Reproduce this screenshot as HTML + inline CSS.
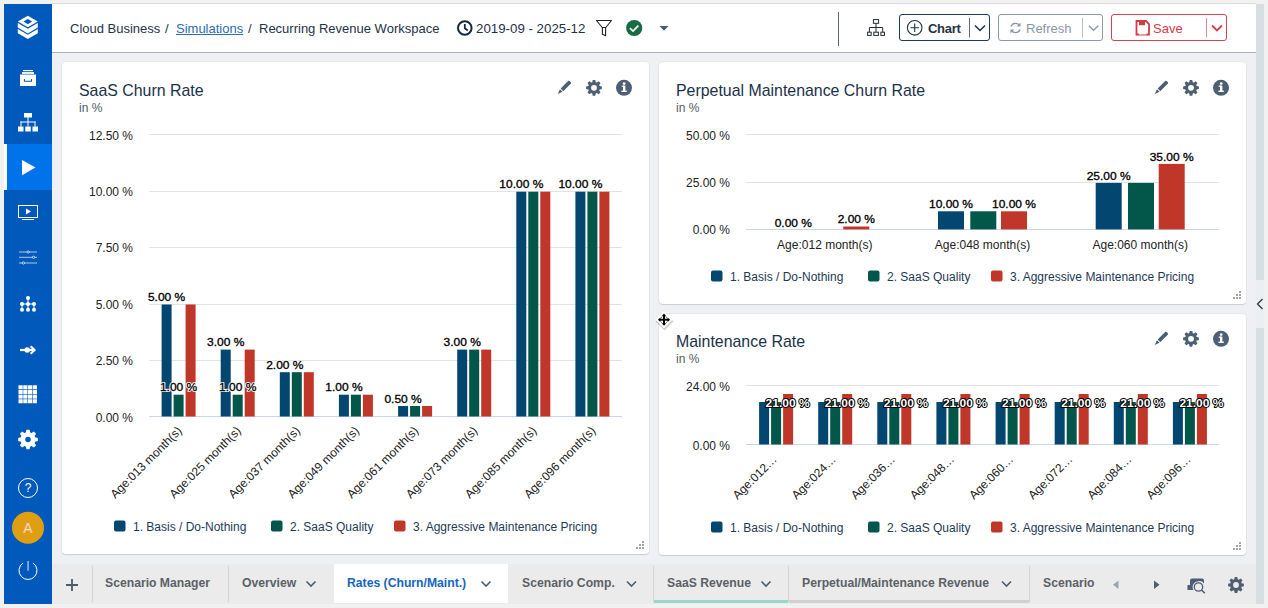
<!DOCTYPE html>
<html><head><meta charset="utf-8">
<style>
*{box-sizing:border-box;margin:0;padding:0}
html,body{width:1268px;height:608px;overflow:hidden;background:#f1f1f1;font-family:"Liberation Sans",sans-serif}
.abs{position:absolute}
#side{left:4px;top:4px;width:48px;height:600px;background:#0059bb}
#hdr{left:52px;top:4px;width:1204px;height:49px;background:#fff;border-bottom:1px solid #aab3ba}
#content{left:52px;top:53px;width:1204px;height:511px;background:#eef0f3}
#rstrip{left:1256px;top:4px;width:8px;height:600px;background:#d7dfe2}
.card{background:#fff;border-radius:4px;box-shadow:0 1px 1px rgba(0,0,0,.12),0 0 0 1px rgba(0,0,0,.03)}
.ttl{font-size:15.9px;color:#1a3148;white-space:nowrap;margin-top:1px}
.sub{font-size:12px;color:#555b61;white-space:nowrap;margin-top:1px}
.crumb{font-size:13px;color:#1d3347;white-space:nowrap;margin-top:1px}
#tabs{left:52px;top:564px;width:1204px;height:40px;background:#ebebeb}
.tab{font-size:12.2px;font-weight:700;color:#5b6167;white-space:nowrap}
.sep{width:1px;background:#d4d4d4}
svg text{font-family:"Liberation Sans",sans-serif}
</style></head>
<body>
<div class="abs" id="side"></div>
<div class="abs" id="hdr"></div>
<div class="abs" style="left:52px;top:3px;width:1204px;height:1px;background:#dcdcdc"></div>
<div class="abs" id="content"></div>
<div class="abs" id="rstrip"></div>
<div class="abs" style="left:1256px;top:280px;width:8px;height:48px;background:#eceff1"></div>

<!-- active sidebar item -->
<div class="abs" style="left:4px;top:144px;width:48px;height:46px;background:#0073eb"></div>
<div class="abs" style="left:4px;top:144px;width:3px;height:46px;background:#fff"></div>

<!-- cards -->
<div class="abs card" style="left:62px;top:62px;width:587px;height:492px"></div>
<div class="abs card" style="left:659px;top:62px;width:587px;height:242px"></div>
<div class="abs card" style="left:659px;top:314px;width:587px;height:241px"></div>

<!-- breadcrumbs -->
<div class="abs crumb" style="left:70px;top:20px">Cloud Business</div>
<div class="abs crumb" style="left:165px;top:20px">/</div>
<div class="abs crumb" style="left:176px;top:20px;color:#2a6db0;text-decoration:underline">Simulations</div>
<div class="abs crumb" style="left:248px;top:20px">/</div>
<div class="abs crumb" style="left:259px;top:20px">Recurring Revenue Workspace</div>
<div class="abs crumb" style="left:476px;top:20px;font-size:13.3px;margin-top:0.5px">2019-09 - 2025-12</div>

<!-- header buttons -->
<div class="abs" style="left:838px;top:12px;width:1px;height:34px;background:#5d6670"></div>
<div class="abs" style="left:899px;top:14px;width:91px;height:27px;border:1.5px solid #1f3a55;border-radius:3px"></div>
<div class="abs" style="left:928px;top:21px;font-size:13px;font-weight:700;color:#1d3347;letter-spacing:-0.3px">Chart</div>
<div class="abs" style="left:998px;top:14px;width:105px;height:27px;border:1.5px solid #8b9aaa;border-radius:3px"></div>
<div class="abs" style="left:1026px;top:21px;font-size:13px;color:#8797a8">Refresh</div>
<div class="abs" style="left:1111px;top:14px;width:116px;height:27px;border:1.5px solid #d9414d;border-radius:3px"></div>
<div class="abs" style="left:1153px;top:21px;font-size:13px;color:#d63a47">Save</div>

<!-- card titles -->
<div class="abs ttl" style="left:79px;top:81px">SaaS Churn Rate</div>
<div class="abs sub" style="left:79px;top:100px">in %</div>
<div class="abs ttl" style="left:676px;top:81px">Perpetual Maintenance Churn Rate</div>
<div class="abs sub" style="left:676px;top:100px">in %</div>
<div class="abs ttl" style="left:676px;top:332px">Maintenance Rate</div>
<div class="abs sub" style="left:676px;top:351px">in %</div>

<!-- tabs -->
<div class="abs" id="tabs"></div>
<div class="abs sep" style="left:92px;top:566px;height:36px"></div>
<div class="abs sep" style="left:228px;top:566px;height:36px"></div>
<div class="abs" style="left:334px;top:564px;width:174px;height:39px;background:#fff"></div>
<div class="abs sep" style="left:653px;top:566px;height:36px"></div>
<div class="abs sep" style="left:788px;top:566px;height:36px"></div>
<div class="abs sep" style="left:1029px;top:566px;height:36px"></div>
<div class="abs" style="left:654px;top:600px;width:134px;height:3px;background:#95d9cc"></div>
<div class="abs" style="left:789px;top:600px;width:240px;height:3px;background:#d0d0d0"></div>
<div class="abs tab" style="left:105px;top:576px">Scenario Manager</div>
<div class="abs tab" style="left:242px;top:576px">Overview</div>
<div class="abs tab" style="left:347px;top:576px;color:#1565c0">Rates (Churn/Maint.)</div>
<div class="abs tab" style="left:522px;top:576px">Scenario Comp.</div>
<div class="abs tab" style="left:667px;top:576px">SaaS Revenue</div>
<div class="abs tab" style="left:802px;top:576px">Perpetual/Maintenance Revenue</div>
<div class="abs tab" style="left:1043px;top:576px">Scenario</div>

<svg class="abs" style="left:0;top:0" width="1268" height="608" viewBox="0 0 1268 608">
<defs><path id="gearpath" d="M-2.20,-7.07 L-1.60,-9.87 L1.60,-9.87 L2.20,-7.07 A7.4,7.4 0 0 1 3.44,-6.55 L5.85,-8.11 L8.11,-5.85 L6.55,-3.44 A7.4,7.4 0 0 1 7.07,-2.20 L9.87,-1.60 L9.87,1.60 L7.07,2.20 A7.4,7.4 0 0 1 6.55,3.44 L8.11,5.85 L5.85,8.11 L3.44,6.55 A7.4,7.4 0 0 1 2.20,7.07 L1.60,9.87 L-1.60,9.87 L-2.20,7.07 A7.4,7.4 0 0 1 -3.44,6.55 L-5.85,8.11 L-8.11,5.85 L-6.55,3.44 A7.4,7.4 0 0 1 -7.07,2.20 L-9.87,1.60 L-9.87,-1.60 L-7.07,-2.20 A7.4,7.4 0 0 1 -6.55,-3.44 L-8.11,-5.85 L-5.85,-8.11 L-3.44,-6.55 A7.4,7.4 0 0 1 -2.20,-7.07 Z M3.6,0 A3.6,3.6 0 1 0 -3.6,0 A3.6,3.6 0 1 0 3.6,0 Z" fill-rule="evenodd"/></defs>
<!-- sidebar logo -->
<g fill="#fff">
<path d="M27.8,15.8 L37.8,21.5 L27.8,27.3 L17.8,21.5 Z M27.8,19.1 L32.1,21.6 L27.8,24.2 L23.5,21.6 Z" fill-rule="evenodd"/>
<path d="M17.8,22.9 L27.8,28.7 L37.8,22.9 L37.8,27.6 L27.8,33.4 L17.8,27.6 Z"/>
<path d="M17.8,29.0 L27.8,34.8 L37.8,29.0 L37.8,33.2 L27.8,38.9 L17.8,33.2 Z"/>
</g>
<!-- archive -->
<g fill="#fff">
<rect x="23" y="70" width="10" height="1.2"/>
<rect x="22" y="72.1" width="12" height="1.8"/>
<path d="M20,74.6 H36 V86 H20 Z M23.9,79 V81.8 H32 V79 H31 V80.8 H24.9 V79 Z" fill-rule="evenodd"/>
</g>
<!-- hierarchy -->
<g fill="#fff">
<rect x="24" y="113" width="8" height="4.5"/>
<rect x="18" y="126.5" width="5.5" height="5"/>
<rect x="25.3" y="126.5" width="5.5" height="5"/>
<rect x="32.5" y="126.5" width="5.5" height="5"/>
<rect x="27.5" y="117" width="1" height="9.5"/>
<rect x="20.5" y="121.5" width="15" height="1"/>
<rect x="20.5" y="121.5" width="1" height="5"/>
<rect x="34.5" y="121.5" width="1" height="5"/>
</g>
<!-- play -->
<path d="M22,160 L35.5,167.5 L22,175.3 Z" fill="#fff"/>
<!-- monitor -->
<g fill="none" stroke="#fff" stroke-width="1">
<rect x="18.5" y="205.5" width="19" height="12"/>
</g>
<path d="M26,208.5 L31,211.5 L26,214.5 Z" fill="#fff"/>
<rect x="22" y="219" width="12" height="1" fill="#fff"/>
<!-- sliders -->
<g stroke="#fff" stroke-width="0.8" fill="#0059bb" stroke-opacity="0.85">
<line x1="19" y1="252" x2="37" y2="252"/>
<line x1="19" y1="257.3" x2="37" y2="257.3"/>
<line x1="19" y1="263" x2="37" y2="263"/>
<circle cx="28.2" cy="252" r="1.15"/>
<circle cx="33.6" cy="257.3" r="1.15"/>
<circle cx="23.4" cy="263" r="1.15"/>
</g>
<!-- network dots -->
<g fill="#fff">
<circle cx="28" cy="298" r="2"/>
<circle cx="22" cy="304" r="2"/><circle cx="28" cy="304" r="2"/><circle cx="34" cy="304" r="2"/>
<circle cx="22" cy="309.8" r="2"/><circle cx="28" cy="309.8" r="2"/><circle cx="34" cy="309.8" r="2"/>
<rect x="22" y="303.5" width="12" height="1"/>
<rect x="27.5" y="298" width="1" height="12"/><rect x="21.5" y="304" width="1" height="6"/><rect x="33.5" y="304" width="1" height="6"/>
</g>
<!-- arrow -->
<g fill="#fff">
<rect x="20" y="348.9" width="13" height="2.2"/>
<circle cx="27.2" cy="350" r="2.7"/>
<path d="M30.6,346.2 L34.6,350 L30.6,353.8" fill="none" stroke="#fff" stroke-width="2.1"/>
</g>
<!-- grid -->
<g fill="#fff">
<rect x="18.50" y="385.30" width="4.2" height="4.0"/><rect x="23.25" y="385.30" width="4.2" height="4.0"/><rect x="28.00" y="385.30" width="4.2" height="4.0"/><rect x="32.75" y="385.30" width="4.2" height="4.0"/><rect x="18.50" y="389.95" width="4.2" height="4.0"/><rect x="23.25" y="389.95" width="4.2" height="4.0"/><rect x="28.00" y="389.95" width="4.2" height="4.0"/><rect x="32.75" y="389.95" width="4.2" height="4.0"/><rect x="18.50" y="394.60" width="4.2" height="4.0"/><rect x="23.25" y="394.60" width="4.2" height="4.0"/><rect x="28.00" y="394.60" width="4.2" height="4.0"/><rect x="32.75" y="394.60" width="4.2" height="4.0"/><rect x="18.50" y="399.25" width="4.2" height="4.0"/><rect x="23.25" y="399.25" width="4.2" height="4.0"/><rect x="28.00" y="399.25" width="4.2" height="4.0"/><rect x="32.75" y="399.25" width="4.2" height="4.0"/>
</g>
<!-- gear sidebar -->
<g transform="translate(28,439.5)">
<g fill="#fff"><path d="M-2.20,-7.07 L-1.60,-9.87 L1.60,-9.87 L2.20,-7.07 A7.4,7.4 0 0 1 3.44,-6.55 L5.85,-8.11 L8.11,-5.85 L6.55,-3.44 A7.4,7.4 0 0 1 7.07,-2.20 L9.87,-1.60 L9.87,1.60 L7.07,2.20 A7.4,7.4 0 0 1 6.55,3.44 L8.11,5.85 L5.85,8.11 L3.44,6.55 A7.4,7.4 0 0 1 2.20,7.07 L1.60,9.87 L-1.60,9.87 L-2.20,7.07 A7.4,7.4 0 0 1 -3.44,6.55 L-5.85,8.11 L-8.11,5.85 L-6.55,3.44 A7.4,7.4 0 0 1 -7.07,2.20 L-9.87,1.60 L-9.87,-1.60 L-7.07,-2.20 A7.4,7.4 0 0 1 -6.55,-3.44 L-8.11,-5.85 L-5.85,-8.11 L-3.44,-6.55 A7.4,7.4 0 0 1 -2.20,-7.07 Z M2.8,0 A2.8,2.8 0 1 0 -2.8,0 A2.8,2.8 0 1 0 2.8,0 Z" fill-rule="evenodd"/></g>
</g>
<!-- question -->
<circle cx="28" cy="488" r="9.5" fill="none" stroke="#fff" stroke-width="1"/>
<text x="28" y="492.3" text-anchor="middle" style="font-size:12px;font-weight:400" fill="#fff">?</text>
<!-- avatar -->
<circle cx="28" cy="527.8" r="16" fill="#e09e12"/>
<text x="28" y="533" text-anchor="middle" style="font-size:14px" fill="#f7d9cf">A</text>
<!-- power -->
<path d="M33.16,563.13 A9,9 0 1 1 22.84,563.13" fill="none" stroke="#fff" stroke-width="1"/>
<rect x="27.5" y="561" width="1.1" height="9.7" fill="#cfe0f5"/>

<!-- header: clock -->
<circle cx="464.8" cy="28" r="6.8" fill="none" stroke="#14283d" stroke-width="2"/>
<path d="M464.8,24 V28.3 L467.8,30.5" fill="none" stroke="#14283d" stroke-width="1.8"/>
<!-- filter -->
<path d="M596.5,20.5 H611.5 L605.8,27.5 H602.2 Z M602.4,27.5 V34.3 L605.6,35.8 V27.5" fill="none" stroke="#222" stroke-width="1.1" stroke-linejoin="round"/>
<!-- check -->
<circle cx="634.2" cy="28" r="8.1" fill="#186b45"/>
<path d="M629.9,28.1 L633,31 L638.4,25.6" fill="none" stroke="#fff" stroke-width="1.7"/>
<!-- caret -->
<path d="M659.5,26 H668.5 L664,30.8 Z" fill="#4d5e70"/>
<!-- hierarchy header -->
<g fill="none" stroke="#262b31" stroke-width="1">
<rect x="873.4" y="19.6" width="5.2" height="3.7"/>
<rect x="867.6" y="32.2" width="3.6" height="3.2"/>
<rect x="873.8" y="32.2" width="4.6" height="3.2"/>
<rect x="880.9" y="32.2" width="3.6" height="3.2"/>
<path d="M876,23.3 V32.2 M869.4,32.2 V27.5 H882.7 V32.2"/>
</g>
<!-- chart plus -->
<circle cx="914.7" cy="27.8" r="7.3" fill="none" stroke="#1d3347" stroke-width="1.1"/>
<path d="M914.7,23.5 V32 M910.5,27.8 H919" stroke="#1d3347" stroke-width="1.1"/>
<rect x="969" y="18" width="1" height="19.5" fill="#5f6b77"/>
<path d="M975,25.5 L980,30.5 L985,25.5" fill="none" stroke="#1d3347" stroke-width="1.5"/>
<!-- refresh -->
<path d="M1019.5,25.5 A4.8,4.8 0 0 0 1011,26.5 M1011.5,30.5 A4.8,4.8 0 0 0 1020,29.5" fill="none" stroke="#8797a8" stroke-width="1.4"/>
<path d="M1020.5,22.5 V26.5 H1016.8 Z M1010.5,33.5 V29.5 H1014.2 Z" fill="#8797a8"/>
<rect x="1082" y="18" width="1" height="19.5" fill="#b3bdc7"/>
<path d="M1088.8,25.8 L1093.5,30.3 L1098.2,25.8" fill="none" stroke="#8b9aaa" stroke-width="1.3"/>
<!-- save floppy -->
<path d="M1136.5,21 H1146 L1149,24 V34.5 H1136.5 Z" fill="none" stroke="#d63a47" stroke-width="1.8"/>
<rect x="1139" y="21" width="6" height="4.2" fill="#d63a47"/>
<rect x="1139" y="29" width="7.5" height="5.5" fill="#fff"/>
<rect x="1206" y="18" width="1" height="19.5" fill="#e28a92"/>
<path d="M1212,25.5 L1217,30.5 L1222,25.5" fill="none" stroke="#d63a47" stroke-width="1.8"/>

<!-- card icons -->
<g id="ci1">
<g transform="translate(563.8,88) rotate(45)" fill="#4d5f72">
<rect x="-1.8" y="-8.6" width="3.6" height="11.2" rx="0.3"/>
<path d="M-1.6,-8.2 A1.8,1.8 0 0 1 1.6,-8.2 V-7.4 H-1.6 Z"/>
<path d="M-1.8,3.6 H1.8 L0,8.6 Z"/>
</g>
<g transform="translate(594,87.8) scale(0.8)" fill="#4d5f72"><use href="#gearpath"/></g>
<circle cx="624" cy="87.8" r="8" fill="#4d5f72"/>
<g fill="#fff">
<circle cx="624.2" cy="83.6" r="1.4"/>
<rect x="623" y="85.6" width="2.4" height="5.6"/>
<rect x="621.7" y="85.6" width="2.5" height="1.2"/>
<rect x="621.4" y="90.6" width="5.4" height="1.4"/>
</g>
</g>
<g transform="translate(597,0)"><use href="#ci1"/></g>
<g transform="translate(597,251)"><use href="#ci1"/></g>
<!-- resize handles -->
<g id="rh" fill="#a3a3a3">
<rect x="642" y="541" width="2" height="2"/>
<rect x="639" y="544" width="2" height="2"/><rect x="642" y="544" width="2" height="2"/>
<rect x="636" y="547" width="2" height="2"/><rect x="639" y="547" width="2" height="2"/><rect x="642" y="547" width="2" height="2"/>
</g>
<g transform="translate(597,-250)"><use href="#rh"/></g>
<g transform="translate(597,1)"><use href="#rh"/></g>
<!-- right strip chevron -->
<path d="M1262.5,299 L1257.5,304 L1262.5,309" fill="none" stroke="#1d3347" stroke-width="1.2"/>
<!-- move cursor -->
<path d="M664.5,312.5 L673.5,321.5 L664.5,330.5 L655.5,321.5 Z" fill="#000" opacity="0.18"/>
<path d="M664,311 L672.5,319.6 L664,328.2 L655.5,319.6 Z" fill="#fff"/>
<g fill="#000">
<rect x="659.5" y="318.7" width="9" height="2"/>
<rect x="663" y="315.2" width="2" height="9"/>
<path d="M664,313.6 L666.3,316.2 H661.7 Z"/>
<path d="M664,325.8 L666.3,323.2 H661.7 Z"/>
<path d="M657.9,319.7 L660.5,317.4 V322 Z"/>
<path d="M670.1,319.7 L667.5,317.4 V322 Z"/>
</g>
<g fill="#555"><circle cx="661.4" cy="317.3" r="0.55"/><circle cx="666.6" cy="317.3" r="0.55"/><circle cx="661.4" cy="322.3" r="0.55"/><circle cx="666.6" cy="322.3" r="0.55"/></g>

<!-- tabs icons -->
<path d="M66,585 H78 M72,579 V591" stroke="#4d5a66" stroke-width="1.8"/>
<g fill="none" stroke="#4d5e70" stroke-width="1.6">
<path d="M306.5,581.5 L311,586 L315.5,581.5"/>
<path d="M481.5,581.5 L486,586 L490.5,581.5"/>
<path d="M627,581.5 L631.5,586 L636,581.5"/>
<path d="M761.5,581.5 L766,586 L770.5,581.5"/>
<path d="M1002,581.5 L1006.5,586 L1011,581.5"/>
</g>
<path d="M1118.5,580.5 V589 L1113,584.8 Z" fill="#9aa5af"/>
<path d="M1154,580.5 V589 L1159.5,584.8 Z" fill="#4d5e70"/>
<!-- search with folder -->
<path d="M1187.5,585 V590 H1193.5 A5.5,5.5 0 0 1 1197.5,581.5 A5.5,5.5 0 0 1 1204,583.5 V580.5 A2,2 0 0 0 1202,578.5 H1192 A2,2 0 0 0 1190,580.5 V585 Z" fill="#4d5e70"/>
<circle cx="1198.5" cy="587" r="4.2" fill="none" stroke="#4d5e70" stroke-width="1.3"/>
<path d="M1201.5,590 L1204.8,593.3" stroke="#4d5e70" stroke-width="1.6"/>
<g transform="translate(1236,585) scale(0.8)" fill="#4d5e70"><use href="#gearpath"/></g>

<rect x="149" y="134" width="473" height="1" fill="#e2e3e6"/><text transform="translate(133.00,139.50)" text-anchor="end" style="font-size:12px;font-weight:400;" fill="#222">12.50 %</text><rect x="149" y="191" width="473" height="1" fill="#e2e3e6"/><text transform="translate(133.00,195.90)" text-anchor="end" style="font-size:12px;font-weight:400;" fill="#222">10.00 %</text><rect x="149" y="247" width="473" height="1" fill="#e2e3e6"/><text transform="translate(133.00,252.30)" text-anchor="end" style="font-size:12px;font-weight:400;" fill="#222">7.50 %</text><rect x="149" y="304" width="473" height="1" fill="#e2e3e6"/><text transform="translate(133.00,308.70)" text-anchor="end" style="font-size:12px;font-weight:400;" fill="#222">5.00 %</text><rect x="149" y="360" width="473" height="1" fill="#e2e3e6"/><text transform="translate(133.00,365.10)" text-anchor="end" style="font-size:12px;font-weight:400;" fill="#222">2.50 %</text><rect x="149" y="416" width="473" height="1" fill="#ccd6eb"/><text transform="translate(133.00,421.50)" text-anchor="end" style="font-size:12px;font-weight:400;" fill="#222">0.00 %</text><rect x="161.6" y="304.5" width="10" height="112.0" fill="#03466f"/><rect x="173.6" y="394.7" width="10" height="21.8" fill="#03574a"/><rect x="185.6" y="304.5" width="10" height="112.0" fill="#c03629"/><rect x="220.7" y="349.6" width="10" height="66.9" fill="#03466f"/><rect x="232.7" y="394.7" width="10" height="21.8" fill="#03574a"/><rect x="244.7" y="349.6" width="10" height="66.9" fill="#c03629"/><rect x="279.8" y="372.2" width="10" height="44.3" fill="#03466f"/><rect x="291.8" y="372.2" width="10" height="44.3" fill="#03574a"/><rect x="303.8" y="372.2" width="10" height="44.3" fill="#c03629"/><rect x="338.9" y="394.7" width="10" height="21.8" fill="#03466f"/><rect x="350.9" y="394.7" width="10" height="21.8" fill="#03574a"/><rect x="362.9" y="394.7" width="10" height="21.8" fill="#c03629"/><rect x="398.1" y="406.0" width="10" height="10.5" fill="#03466f"/><rect x="410.1" y="406.0" width="10" height="10.5" fill="#03574a"/><rect x="422.1" y="406.0" width="10" height="10.5" fill="#c03629"/><rect x="457.2" y="349.6" width="10" height="66.9" fill="#03466f"/><rect x="469.2" y="349.6" width="10" height="66.9" fill="#03574a"/><rect x="481.2" y="349.6" width="10" height="66.9" fill="#c03629"/><rect x="516.3" y="191.7" width="10" height="224.8" fill="#03466f"/><rect x="528.3" y="191.7" width="10" height="224.8" fill="#03574a"/><rect x="540.3" y="191.7" width="10" height="224.8" fill="#c03629"/><rect x="575.4" y="191.7" width="10" height="224.8" fill="#03466f"/><rect x="587.4" y="191.7" width="10" height="224.8" fill="#03574a"/><rect x="599.4" y="191.7" width="10" height="224.8" fill="#c03629"/><text transform="translate(166.56,301.20) scale(1.09,1)" text-anchor="middle" style="font-size:11px;font-weight:400;" fill="#fff" stroke="#fff" stroke-width="2.1" stroke-linejoin="round">5.00 %</text><text transform="translate(166.56,301.20) scale(1.09,1)" text-anchor="middle" style="font-size:11px;font-weight:400;" fill="#000" stroke="#000" stroke-width="0.3">5.00 %</text><text transform="translate(178.56,391.44) scale(1.09,1)" text-anchor="middle" style="font-size:11px;font-weight:400;" fill="#fff" stroke="#fff" stroke-width="2.1" stroke-linejoin="round">1.00 %</text><text transform="translate(178.56,391.44) scale(1.09,1)" text-anchor="middle" style="font-size:11px;font-weight:400;" fill="#000" stroke="#000" stroke-width="0.3">1.00 %</text><text transform="translate(225.69,346.32) scale(1.09,1)" text-anchor="middle" style="font-size:11px;font-weight:400;" fill="#fff" stroke="#fff" stroke-width="2.1" stroke-linejoin="round">3.00 %</text><text transform="translate(225.69,346.32) scale(1.09,1)" text-anchor="middle" style="font-size:11px;font-weight:400;" fill="#000" stroke="#000" stroke-width="0.3">3.00 %</text><text transform="translate(237.69,391.44) scale(1.09,1)" text-anchor="middle" style="font-size:11px;font-weight:400;" fill="#fff" stroke="#fff" stroke-width="2.1" stroke-linejoin="round">1.00 %</text><text transform="translate(237.69,391.44) scale(1.09,1)" text-anchor="middle" style="font-size:11px;font-weight:400;" fill="#000" stroke="#000" stroke-width="0.3">1.00 %</text><text transform="translate(284.81,368.88) scale(1.09,1)" text-anchor="middle" style="font-size:11px;font-weight:400;" fill="#fff" stroke="#fff" stroke-width="2.1" stroke-linejoin="round">2.00 %</text><text transform="translate(284.81,368.88) scale(1.09,1)" text-anchor="middle" style="font-size:11px;font-weight:400;" fill="#000" stroke="#000" stroke-width="0.3">2.00 %</text><text transform="translate(343.94,391.44) scale(1.09,1)" text-anchor="middle" style="font-size:11px;font-weight:400;" fill="#fff" stroke="#fff" stroke-width="2.1" stroke-linejoin="round">1.00 %</text><text transform="translate(343.94,391.44) scale(1.09,1)" text-anchor="middle" style="font-size:11px;font-weight:400;" fill="#000" stroke="#000" stroke-width="0.3">1.00 %</text><text transform="translate(403.06,402.72) scale(1.09,1)" text-anchor="middle" style="font-size:11px;font-weight:400;" fill="#fff" stroke="#fff" stroke-width="2.1" stroke-linejoin="round">0.50 %</text><text transform="translate(403.06,402.72) scale(1.09,1)" text-anchor="middle" style="font-size:11px;font-weight:400;" fill="#000" stroke="#000" stroke-width="0.3">0.50 %</text><text transform="translate(462.19,346.32) scale(1.09,1)" text-anchor="middle" style="font-size:11px;font-weight:400;" fill="#fff" stroke="#fff" stroke-width="2.1" stroke-linejoin="round">3.00 %</text><text transform="translate(462.19,346.32) scale(1.09,1)" text-anchor="middle" style="font-size:11px;font-weight:400;" fill="#000" stroke="#000" stroke-width="0.3">3.00 %</text><text transform="translate(521.31,188.40) scale(1.09,1)" text-anchor="middle" style="font-size:11px;font-weight:400;" fill="#fff" stroke="#fff" stroke-width="2.1" stroke-linejoin="round">10.00 %</text><text transform="translate(521.31,188.40) scale(1.09,1)" text-anchor="middle" style="font-size:11px;font-weight:400;" fill="#000" stroke="#000" stroke-width="0.3">10.00 %</text><text transform="translate(580.44,188.40) scale(1.09,1)" text-anchor="middle" style="font-size:11px;font-weight:400;" fill="#fff" stroke="#fff" stroke-width="2.1" stroke-linejoin="round">10.00 %</text><text transform="translate(580.44,188.40) scale(1.09,1)" text-anchor="middle" style="font-size:11px;font-weight:400;" fill="#000" stroke="#000" stroke-width="0.3">10.00 %</text><text transform="translate(182.6,431.5) rotate(-45)" text-anchor="end" style="font-size:12px" fill="#222">Age:013 month(s)</text><text transform="translate(241.7,431.5) rotate(-45)" text-anchor="end" style="font-size:12px" fill="#222">Age:025 month(s)</text><text transform="translate(300.8,431.5) rotate(-45)" text-anchor="end" style="font-size:12px" fill="#222">Age:037 month(s)</text><text transform="translate(359.9,431.5) rotate(-45)" text-anchor="end" style="font-size:12px" fill="#222">Age:049 month(s)</text><text transform="translate(419.1,431.5) rotate(-45)" text-anchor="end" style="font-size:12px" fill="#222">Age:061 month(s)</text><text transform="translate(478.2,431.5) rotate(-45)" text-anchor="end" style="font-size:12px" fill="#222">Age:073 month(s)</text><text transform="translate(537.3,431.5) rotate(-45)" text-anchor="end" style="font-size:12px" fill="#222">Age:085 month(s)</text><text transform="translate(596.4,431.5) rotate(-45)" text-anchor="end" style="font-size:12px" fill="#222">Age:096 month(s)</text><rect x="746" y="134" width="473" height="1" fill="#e2e3e6"/><text transform="translate(730.00,139.60)" text-anchor="end" style="font-size:12px;font-weight:400;" fill="#222">50.00 %</text><rect x="746" y="182" width="473" height="1" fill="#e2e3e6"/><text transform="translate(730.00,187.00)" text-anchor="end" style="font-size:12px;font-weight:400;" fill="#222">25.00 %</text><rect x="746" y="229" width="473" height="1" fill="#ccd6eb"/><text transform="translate(730.00,234.40)" text-anchor="end" style="font-size:12px;font-weight:400;" fill="#222">0.00 %</text><rect x="843.3" y="226.5" width="26" height="2.9" fill="#c03629"/><text x="824.8" y="248.5" text-anchor="middle" style="font-size:12px" fill="#222">Age:012 month(s)</text><rect x="938.0" y="211.3" width="26" height="18.1" fill="#03466f"/><rect x="970.3" y="211.3" width="26" height="18.1" fill="#03574a"/><rect x="1001.0" y="211.3" width="26" height="18.1" fill="#c03629"/><text x="982.5" y="248.5" text-anchor="middle" style="font-size:12px" fill="#222">Age:048 month(s)</text><rect x="1095.7" y="182.9" width="26" height="46.5" fill="#03466f"/><rect x="1128.0" y="182.9" width="26" height="46.5" fill="#03574a"/><rect x="1158.7" y="163.9" width="26" height="65.5" fill="#c03629"/><text x="1140.2" y="248.5" text-anchor="middle" style="font-size:12px" fill="#222">Age:060 month(s)</text><text transform="translate(793.33,226.90) scale(1.09,1)" text-anchor="middle" style="font-size:11px;font-weight:400;" fill="#fff" stroke="#fff" stroke-width="2.1" stroke-linejoin="round">0.00 %</text><text transform="translate(793.33,226.90) scale(1.09,1)" text-anchor="middle" style="font-size:11px;font-weight:400;" fill="#000" stroke="#000" stroke-width="0.3">0.00 %</text><text transform="translate(856.33,223.11) scale(1.09,1)" text-anchor="middle" style="font-size:11px;font-weight:400;" fill="#fff" stroke="#fff" stroke-width="2.1" stroke-linejoin="round">2.00 %</text><text transform="translate(856.33,223.11) scale(1.09,1)" text-anchor="middle" style="font-size:11px;font-weight:400;" fill="#000" stroke="#000" stroke-width="0.3">2.00 %</text><text transform="translate(951.00,207.94) scale(1.09,1)" text-anchor="middle" style="font-size:11px;font-weight:400;" fill="#fff" stroke="#fff" stroke-width="2.1" stroke-linejoin="round">10.00 %</text><text transform="translate(951.00,207.94) scale(1.09,1)" text-anchor="middle" style="font-size:11px;font-weight:400;" fill="#000" stroke="#000" stroke-width="0.3">10.00 %</text><text transform="translate(1014.00,207.94) scale(1.09,1)" text-anchor="middle" style="font-size:11px;font-weight:400;" fill="#fff" stroke="#fff" stroke-width="2.1" stroke-linejoin="round">10.00 %</text><text transform="translate(1014.00,207.94) scale(1.09,1)" text-anchor="middle" style="font-size:11px;font-weight:400;" fill="#000" stroke="#000" stroke-width="0.3">10.00 %</text><text transform="translate(1108.67,179.50) scale(1.09,1)" text-anchor="middle" style="font-size:11px;font-weight:400;" fill="#fff" stroke="#fff" stroke-width="2.1" stroke-linejoin="round">25.00 %</text><text transform="translate(1108.67,179.50) scale(1.09,1)" text-anchor="middle" style="font-size:11px;font-weight:400;" fill="#000" stroke="#000" stroke-width="0.3">25.00 %</text><text transform="translate(1171.67,160.54) scale(1.09,1)" text-anchor="middle" style="font-size:11px;font-weight:400;" fill="#fff" stroke="#fff" stroke-width="2.1" stroke-linejoin="round">35.00 %</text><text transform="translate(1171.67,160.54) scale(1.09,1)" text-anchor="middle" style="font-size:11px;font-weight:400;" fill="#000" stroke="#000" stroke-width="0.3">35.00 %</text><rect x="711" y="270.5" width="11.5" height="11" rx="2" fill="#03466f"/><text x="730" y="280.5" style="font-size:12px" fill="#1d3a55">1. Basis / Do-Nothing</text><rect x="868" y="270.5" width="11.5" height="11" rx="2" fill="#03574a"/><text x="887" y="280.5" style="font-size:12px" fill="#1d3a55">2. SaaS Quality</text><rect x="991" y="270.5" width="11.5" height="11" rx="2" fill="#c03629"/><text x="1010" y="280.5" style="font-size:12px" fill="#1d3a55">3. Aggressive Maintenance Pricing</text><rect x="746" y="385" width="473" height="1" fill="#e2e3e6"/><text transform="translate(730.00,390.50)" text-anchor="end" style="font-size:12px;font-weight:400;" fill="#222">24.00 %</text><rect x="746" y="444" width="473" height="1" fill="#ccd6eb"/><text transform="translate(730.00,449.50)" text-anchor="end" style="font-size:12px;font-weight:400;" fill="#222">0.00 %</text><rect x="759.1" y="402" width="10" height="42.5" fill="#03466f"/><rect x="771.1" y="402" width="10" height="42.5" fill="#03574a"/><rect x="783.1" y="394" width="10" height="50.5" fill="#c03629"/><text transform="translate(787.56,407.00) scale(1.09,1)" text-anchor="middle" style="font-size:11px;font-weight:700;" fill="#000" stroke="#000" stroke-width="1.9" stroke-linejoin="round">21.00 %</text><text transform="translate(787.56,407.00) scale(1.09,1)" text-anchor="middle" style="font-size:11px;font-weight:700;" fill="#fff" stroke="#fff" stroke-width="0">21.00 %</text><text transform="translate(777.6,460) rotate(-45)" text-anchor="end" style="font-size:12px" fill="#222">Age:012…</text><rect x="818.2" y="402" width="10" height="42.5" fill="#03466f"/><rect x="830.2" y="402" width="10" height="42.5" fill="#03574a"/><rect x="842.2" y="394" width="10" height="50.5" fill="#c03629"/><text transform="translate(846.69,407.00) scale(1.09,1)" text-anchor="middle" style="font-size:11px;font-weight:700;" fill="#000" stroke="#000" stroke-width="1.9" stroke-linejoin="round">21.00 %</text><text transform="translate(846.69,407.00) scale(1.09,1)" text-anchor="middle" style="font-size:11px;font-weight:700;" fill="#fff" stroke="#fff" stroke-width="0">21.00 %</text><text transform="translate(836.7,460) rotate(-45)" text-anchor="end" style="font-size:12px" fill="#222">Age:024…</text><rect x="877.3" y="402" width="10" height="42.5" fill="#03466f"/><rect x="889.3" y="402" width="10" height="42.5" fill="#03574a"/><rect x="901.3" y="394" width="10" height="50.5" fill="#c03629"/><text transform="translate(905.81,407.00) scale(1.09,1)" text-anchor="middle" style="font-size:11px;font-weight:700;" fill="#000" stroke="#000" stroke-width="1.9" stroke-linejoin="round">21.00 %</text><text transform="translate(905.81,407.00) scale(1.09,1)" text-anchor="middle" style="font-size:11px;font-weight:700;" fill="#fff" stroke="#fff" stroke-width="0">21.00 %</text><text transform="translate(895.8,460) rotate(-45)" text-anchor="end" style="font-size:12px" fill="#222">Age:036…</text><rect x="936.4" y="402" width="10" height="42.5" fill="#03466f"/><rect x="948.4" y="402" width="10" height="42.5" fill="#03574a"/><rect x="960.4" y="394" width="10" height="50.5" fill="#c03629"/><text transform="translate(964.94,407.00) scale(1.09,1)" text-anchor="middle" style="font-size:11px;font-weight:700;" fill="#000" stroke="#000" stroke-width="1.9" stroke-linejoin="round">21.00 %</text><text transform="translate(964.94,407.00) scale(1.09,1)" text-anchor="middle" style="font-size:11px;font-weight:700;" fill="#fff" stroke="#fff" stroke-width="0">21.00 %</text><text transform="translate(954.9,460) rotate(-45)" text-anchor="end" style="font-size:12px" fill="#222">Age:048…</text><rect x="995.6" y="402" width="10" height="42.5" fill="#03466f"/><rect x="1007.6" y="402" width="10" height="42.5" fill="#03574a"/><rect x="1019.6" y="394" width="10" height="50.5" fill="#c03629"/><text transform="translate(1024.06,407.00) scale(1.09,1)" text-anchor="middle" style="font-size:11px;font-weight:700;" fill="#000" stroke="#000" stroke-width="1.9" stroke-linejoin="round">21.00 %</text><text transform="translate(1024.06,407.00) scale(1.09,1)" text-anchor="middle" style="font-size:11px;font-weight:700;" fill="#fff" stroke="#fff" stroke-width="0">21.00 %</text><text transform="translate(1014.1,460) rotate(-45)" text-anchor="end" style="font-size:12px" fill="#222">Age:060…</text><rect x="1054.7" y="402" width="10" height="42.5" fill="#03466f"/><rect x="1066.7" y="402" width="10" height="42.5" fill="#03574a"/><rect x="1078.7" y="394" width="10" height="50.5" fill="#c03629"/><text transform="translate(1083.19,407.00) scale(1.09,1)" text-anchor="middle" style="font-size:11px;font-weight:700;" fill="#000" stroke="#000" stroke-width="1.9" stroke-linejoin="round">21.00 %</text><text transform="translate(1083.19,407.00) scale(1.09,1)" text-anchor="middle" style="font-size:11px;font-weight:700;" fill="#fff" stroke="#fff" stroke-width="0">21.00 %</text><text transform="translate(1073.2,460) rotate(-45)" text-anchor="end" style="font-size:12px" fill="#222">Age:072…</text><rect x="1113.8" y="402" width="10" height="42.5" fill="#03466f"/><rect x="1125.8" y="402" width="10" height="42.5" fill="#03574a"/><rect x="1137.8" y="394" width="10" height="50.5" fill="#c03629"/><text transform="translate(1142.31,407.00) scale(1.09,1)" text-anchor="middle" style="font-size:11px;font-weight:700;" fill="#000" stroke="#000" stroke-width="1.9" stroke-linejoin="round">21.00 %</text><text transform="translate(1142.31,407.00) scale(1.09,1)" text-anchor="middle" style="font-size:11px;font-weight:700;" fill="#fff" stroke="#fff" stroke-width="0">21.00 %</text><text transform="translate(1132.3,460) rotate(-45)" text-anchor="end" style="font-size:12px" fill="#222">Age:084…</text><rect x="1172.9" y="402" width="10" height="42.5" fill="#03466f"/><rect x="1184.9" y="402" width="10" height="42.5" fill="#03574a"/><rect x="1196.9" y="394" width="10" height="50.5" fill="#c03629"/><text transform="translate(1201.44,407.00) scale(1.09,1)" text-anchor="middle" style="font-size:11px;font-weight:700;" fill="#000" stroke="#000" stroke-width="1.9" stroke-linejoin="round">21.00 %</text><text transform="translate(1201.44,407.00) scale(1.09,1)" text-anchor="middle" style="font-size:11px;font-weight:700;" fill="#fff" stroke="#fff" stroke-width="0">21.00 %</text><text transform="translate(1191.4,460) rotate(-45)" text-anchor="end" style="font-size:12px" fill="#222">Age:096…</text><rect x="711" y="521.5" width="11.5" height="11" rx="2" fill="#03466f"/><text x="730" y="531.5" style="font-size:12px" fill="#1d3a55">1. Basis / Do-Nothing</text><rect x="868" y="521.5" width="11.5" height="11" rx="2" fill="#03574a"/><text x="887" y="531.5" style="font-size:12px" fill="#1d3a55">2. SaaS Quality</text><rect x="991" y="521.5" width="11.5" height="11" rx="2" fill="#c03629"/><text x="1010" y="531.5" style="font-size:12px" fill="#1d3a55">3. Aggressive Maintenance Pricing</text><rect x="114" y="520.5" width="11.5" height="11" rx="2" fill="#03466f"/><text x="133" y="530.5" style="font-size:12px" fill="#1d3a55">1. Basis / Do-Nothing</text><rect x="271" y="520.5" width="11.5" height="11" rx="2" fill="#03574a"/><text x="290" y="530.5" style="font-size:12px" fill="#1d3a55">2. SaaS Quality</text><rect x="394" y="520.5" width="11.5" height="11" rx="2" fill="#c03629"/><text x="413" y="530.5" style="font-size:12px" fill="#1d3a55">3. Aggressive Maintenance Pricing</text>
</svg>
</body></html>
